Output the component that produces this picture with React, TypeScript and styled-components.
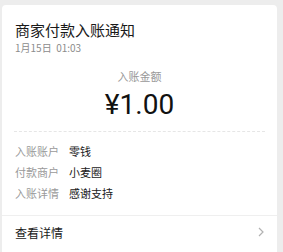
import React from "react";
import styled, { createGlobalStyle } from "styled-components";

const GlobalStyle = createGlobalStyle`
  html, body {
    margin: 0;
    padding: 0;
    background: #ededed;
    font-family: "Noto Sans CJK SC", "Noto Sans", sans-serif;
  }
`;

const Card = styled.div`
  margin: 5px 6px 0 2px;
  background: #ffffff;
  border-radius: 4px;
  min-height: 260px;
`;

const Header = styled.div`
  padding: 15px 13px 0;
`;

const Title = styled.div`
  font-size: 15px;
  line-height: 20px;
  color: #191919;
`;

const Time = styled.div`
  font-size: 10px;
  line-height: 14px;
  color: #8c8c8c;
  margin-top: 1px;
  white-space: pre;
`;

const AmountBlock = styled.div`
  display: flex;
  flex-direction: column;
  align-items: center;
  padding-top: 14px;
`;

const AmountLabel = styled.div`
  font-size: 11px;
  line-height: 15px;
  color: #999999;
`;

const Amount = styled.div`
  font-family: Roboto, "Noto Sans", sans-serif;
  font-size: 28px;
  line-height: 34px;
  color: #111111;
  margin-top: 4px;
`;

const Divider = styled.div`
  margin: 9px 12px 0;
  border-top: 1px dashed #e6e6e6;
`;

const Rows = styled.div`
  display: flex;
  flex-direction: column;
  gap: 6px;
  padding: 12px 13px 14px;
`;

const Row = styled.div`
  display: flex;
  font-size: 11px;
  line-height: 15px;
`;

const Label = styled.span`
  width: 54px;
  color: #9a9a9a;
`;

const Value = styled.span`
  color: #191919;
`;

const Footer = styled.div`
  display: flex;
  align-items: center;
  justify-content: space-between;
  border-top: 1px solid #efefef;
  padding: 0 13px;
  height: 32px;
`;

const FooterText = styled.span`
  font-size: 12px;
  color: #191919;
`;

const rows = [
  ["入账账户", "零钱"],
  ["付款商户", "小麦圈"],
  ["入账详情", "感谢支持"],
];

const App: React.FC = () => {
  return (
    <>
      <GlobalStyle />
      <Card>
        <Header>
          <Title>商家付款入账通知</Title>
          <Time>1月15日  01:03</Time>
        </Header>
        <AmountBlock>
          <AmountLabel>入账金额</AmountLabel>
          <Amount>¥1.00</Amount>
        </AmountBlock>
        <Divider />
        <Rows>
          {rows.map(([k, v]) => (
            <Row key={k}>
              <Label>{k}</Label>
              <Value>{v}</Value>
            </Row>
          ))}
        </Rows>
        <Footer>
          <FooterText>查看详情</FooterText>
          <svg width="6" height="10" viewBox="0 0 6 10">
            <path d="M1 1l4 4-4 4" fill="none" stroke="#b2b2b2" strokeWidth="1.2" />
          </svg>
        </Footer>
      </Card>
    </>
  );
};

export default App;
